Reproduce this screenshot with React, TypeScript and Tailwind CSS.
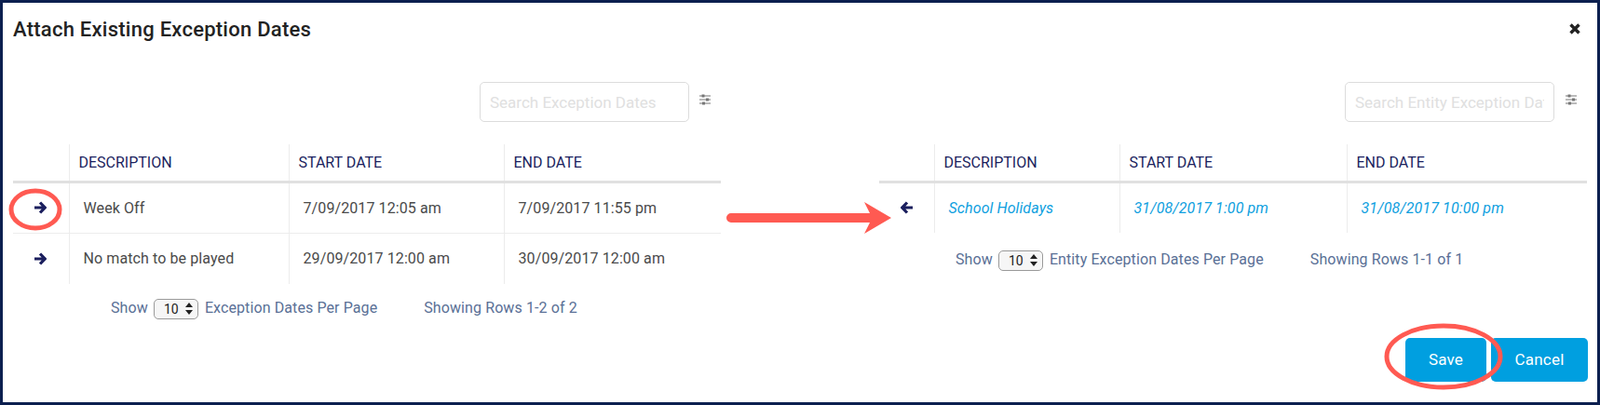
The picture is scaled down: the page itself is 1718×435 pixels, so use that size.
import React from 'react';

interface Row {
    description: string;
    start: string;
    end: string;
}

const leftRows: Row[] = [
    { description: 'Week Off', start: '7/09/2017 12:05 am', end: '7/09/2017 11:55 pm' },
    { description: 'No match to be played', start: '29/09/2017 12:00 am', end: '30/09/2017 12:00 am' },
];

const rightRows: Row[] = [
    { description: 'School Holidays', start: '31/08/2017 1:00 pm', end: '31/08/2017 10:00 pm' },
];

const FilterIcon = () => (
    <svg width="12" height="12" viewBox="0 0 12 12" className="shrink-0 text-[#777]">
        <g fill="currentColor">
            <rect x="0" y="1.5" width="12" height="1" />
            <rect x="0" y="5.5" width="12" height="1" />
            <rect x="0" y="9.5" width="12" height="1" />
            <rect x="2.5" y="0.5" width="3" height="3" />
            <rect x="7" y="4.5" width="3" height="3" />
            <rect x="3" y="8.5" width="3" height="3" />
        </g>
    </svg>
);

const ArrowIcon = ({ left }: { left?: boolean }) => (
    <svg width="14" height="14" viewBox="0 0 14 14" fill="none" stroke="currentColor" strokeWidth="3.2">
        <path d={left ? 'M13 7 H2 M7 1.5 L1.8 7 L7 12.5' : 'M1 7 H12 M7 1.5 L12.2 7 L7 12.5'} />
    </svg>
);

const CloseIcon = () => (
    <svg width="12" height="12" viewBox="0 0 12 12" fill="none" stroke="currentColor" strokeWidth="3.4">
        <path d="M1.5 1.5 L10.5 10.5 M10.5 1.5 L1.5 10.5" />
    </svg>
);

const SearchBox = ({ placeholder, gap }: { placeholder: string; gap: string }) => (
    <div className={`flex items-center justify-end pr-[11px] ${gap}`}>
        <input
            placeholder={placeholder}
            className="w-[225px] h-[43px] px-[10px] text-[17px] bg-white border border-[#dcdcdc] rounded-[5px] outline-none placeholder:text-[#e0e0e0]"
        />
        <div className="-mt-[5px]">
            <FilterIcon />
        </div>
    </div>
);

const PageSelect = () => (
    <div className="relative w-[48px] h-[22px] shrink-0">
        <select className="w-full h-full appearance-none pl-[10px] text-[14px] text-[#222] bg-[#f6f6f6] border border-[#9a9a9a] rounded-[5px]">
            <option>10</option>
        </select>
        <svg width="8" height="13" viewBox="0 0 8 13" className="absolute right-[6px] top-[5px] pointer-events-none text-[#222]">
            <path d="M4 0 L8 5 L0 5 Z M0 8 L8 8 L4 13 Z" fill="currentColor" />
        </svg>
    </div>
);

const Footer = ({ label, showing, className }: { label: string; showing: string; className: string }) => (
    <div className={`flex items-center h-[22px] text-[16px] tracking-[0.1px] text-[#5a7096] ${className}`}>
        <span>Show</span>
        <div className="ml-[6px] mr-[7px]">
            <PageSelect />
        </div>
        <span>{label}</span>
        <span className="ml-[50px]">{showing}</span>
    </div>
);

const DataTable = ({
    rows,
    widths,
    attached,
}: {
    rows: Row[];
    widths: string[];
    attached?: boolean;
}) => (
    <table className="table-fixed w-[760px] border-collapse">
        <thead>
            <tr className="h-[40px] border-b-[3px] border-[#e0e0e0] text-left text-[16px] font-normal text-[#1b1f5e]">
                <th className={`${widths[0]} border-r border-[#ececec]`} />
                <th className={`${widths[1]} pl-[10px] pt-[2px] font-normal border-r border-[#ececec]`}>DESCRIPTION</th>
                <th className={`${widths[2]} pl-[10px] pt-[2px] font-normal border-r border-[#ececec]`}>START DATE</th>
                <th className={`${widths[3]} pl-[10px] pt-[2px] font-normal`}>END DATE</th>
            </tr>
        </thead>
        <tbody>
            {rows.map((row, i) => (
                <tr key={row.description} className={`h-[55px] ${i < rows.length - 1 ? 'border-b border-[#ececec]' : ''}`}>
                    <td className="border-r border-[#ececec] text-[#1b1f5e]">
                        <div className={`flex ${attached ? 'justify-end pr-[22px]' : 'justify-end pr-[24px]'}`}>
                            <ArrowIcon left={attached} />
                        </div>
                    </td>
                    {[row.description, row.start, row.end].map((cell, c) => (
                        <td
                            key={cell}
                            className={`pl-[15px] pt-[1px] text-[16px] tracking-[0.1px] ${attached ? 'italic text-[#0f9fe0]' : 'text-[#4a4a4a]'} ${c < 2 ? 'border-r border-[#ececec]' : ''}`}
                        >
                            {cell}
                        </td>
                    ))}
                </tr>
            ))}
        </tbody>
    </table>
);

export default function App() {
    return (
        <div className="relative w-[1718px] h-[435px] overflow-hidden bg-white border-[3px] border-[#0b1f4f] font-['Roboto',sans-serif]">
            <div className="flex items-start justify-between h-[85px] pl-[11px] pr-[18px] pt-[14px]">
                <h1 className="text-[22px] leading-[30px] tracking-[0.25px] font-medium text-[#222]">Attach Existing Exception Dates</h1>
                <div className="pt-[8px] text-[#222]">
                    <CloseIcon />
                </div>
            </div>

            <div className="flex items-start gap-[170px] pl-[11px]">
                <div className="w-[760px]">
                    <SearchBox gap="gap-[11px]" placeholder="Search Exception Dates" />
                    <div className="mt-[24px]">
                        <DataTable rows={leftRows} widths={['w-[60px]', 'w-[236px]', 'w-[231px]', 'w-[233px]']} />
                    </div>
                    <Footer
                        label="Exception Dates Per Page"
                        showing="Showing Rows 1-2 of 2"
                        className="mt-[15px] pl-[105px]"
                    />
                </div>
                <div className="w-[760px]">
                    <SearchBox gap="gap-[12px]" placeholder="Search Entity Exception Dates" />
                    <div className="mt-[24px]">
                        <DataTable
                            attached
                            rows={rightRows}
                            widths={['w-[59px]', 'w-[199px]', 'w-[244px]', 'w-[258px]']}
                        />
                    </div>
                    <Footer
                        label="Entity Exception Dates Per Page"
                        showing="Showing Rows 1-1 of 1"
                        className="mt-[18px] pl-[82px]"
                    />
                </div>
            </div>

            <div className="flex justify-end gap-[5px] mt-[21px] pr-[10px]">
                <button className="w-[87px] h-[47px] rounded-[5px] bg-[#009fe0] text-[17px] tracking-[0.2px] text-white">Save</button>
                <button className="w-[104px] h-[47px] rounded-[5px] bg-[#009fe0] text-[17px] tracking-[0.2px] text-white">Cancel</button>
            </div>

            {/* Red annotations drawn over the dialog */}
            <svg width="1718" height="435" className="absolute -left-[3px] -top-[3px] pointer-events-none">
                <ellipse cx="38" cy="225" rx="26" ry="20" fill="none" stroke="#ff5a52" strokeWidth="5" />
                <ellipse cx="1550" cy="383" rx="61" ry="33" fill="none" stroke="#ff5a52" strokeWidth="5" />
                <path
                    d="M785 229 H934 L928 217 L957 234 L928 251 L934 239 H785 A5 5 0 0 1 785 229 Z"
                    fill="#ff5a52"
                />
            </svg>
        </div>
    );
}
